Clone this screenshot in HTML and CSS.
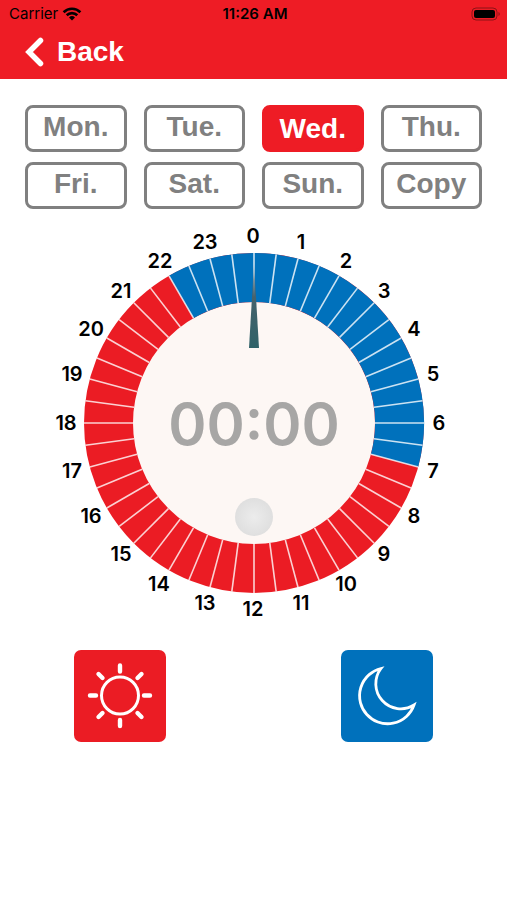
FILE: index.html
```html
<!DOCTYPE html>
<html lang="en">
<head>
<meta charset="utf-8">
<meta name="viewport" content="width=device-width, initial-scale=1">
<title>Day timer</title>
<link rel="stylesheet" href="styles.css">
</head>

<body>
<header class="top">
  <div class="status">
    <div class="carrier">
      <span>Carrier</span>
      <svg width="20" height="14" viewBox="0 0 20 14" aria-hidden="true">
        <g fill="none" stroke="#000" stroke-width="2.6">
          <path d="M1.6 5.2a12 12 0 0 1 16.8 0"/>
          <path d="M4.7 8.3a7.6 7.6 0 0 1 10.6 0"/>
        </g>
        <path d="M10 13.6l-3-3.1a4.3 4.3 0 0 1 6 0z"/>
      </svg>
    </div>
    <div class="clock">11:26 AM</div>
    <div class="battery">
      <svg width="30" height="14" viewBox="0 0 30 14" aria-hidden="true">
        <rect x="1" y="1" width="25" height="12" rx="4" fill="none" stroke="#8c1216"/>
        <rect x="3" y="3" width="21" height="8" rx="2"/>
        <path d="M27.5 5v4a2.2 2.2 0 0 0 0-4z" fill="#8c1216"/>
      </svg>
    </div>
  </div>
  <a class="back" href="#">
    <svg width="20" height="30" viewBox="0 0 20 30" aria-hidden="true">
      <path d="M15.5 3.5L4 15l11.5 11.5" fill="none" stroke="#fff" stroke-width="5.5" stroke-linecap="round"/>
    </svg>
    <span>Back</span>
  </a>
</header>

<main>
  <div class="days">
    <button class="day">Mon.</button>
    <button class="day">Tue.</button>
    <button class="day selected">Wed.</button>
    <button class="day">Thu.</button>
    <button class="day">Fri.</button>
    <button class="day">Sat.</button>
    <button class="day">Sun.</button>
    <button class="day">Copy</button>
  </div>

  <svg class="dial" viewBox="-200 -200 400 400" role="img" aria-label="24 hour dial">
    <defs>
      <!-- one quarter of the half hour marks -->
      <g id="hour">
        <path d="M0-121V-170"/>
        <path d="M0-121V-170" transform="rotate(7.5)"/>
      </g>
      <g id="quarter">
        <use href="#hour"/>
        <use href="#hour" transform="rotate(15)"/>
        <use href="#hour" transform="rotate(30)"/>
        <use href="#hour" transform="rotate(45)"/>
        <use href="#hour" transform="rotate(60)"/>
        <use href="#hour" transform="rotate(75)"/>
      </g>
      <linearGradient id="needle" x1="0" y1="0" x2="0" y2="1">
        <stop offset="0" stop-color="#5f6f78" stop-opacity="0.2"/>
        <stop offset="0.4" stop-color="#46626c"/>
        <stop offset="1" stop-color="#2f6268"/>
      </linearGradient>
      <radialGradient id="knob">
        <stop offset="0" stop-color="#ececec"/>
        <stop offset="1" stop-color="#dfdfdf"/>
      </radialGradient>
    </defs>

    <circle r="122" fill="#fdf7f4"/>
    <circle r="145.5" fill="none" stroke="#eb1c24" stroke-width="49"/>
    <!-- night, 22:00 to 7:00 -->
    <path d="M-72.75-126A145.5 145.5 0 0 1 140.54 37.66" fill="none" stroke="#0071bc" stroke-width="49"/>
    <g stroke="#fff" stroke-opacity="0.8" stroke-width="1.6">
      <use href="#quarter"/>
      <use href="#quarter" transform="rotate(90)"/>
      <use href="#quarter" transform="rotate(180)"/>
      <use href="#quarter" transform="rotate(270)"/>
    </g>
    <path d="M0-160L5-75H-5z" fill="url(#needle)"/>
    <circle cy="94" r="19" fill="url(#knob)"/>

    <g class="hours">
      <text x="-1" y="-180">0</text>
      <text x="47" y="-174">1</text>
      <text x="92" y="-155">2</text>
      <text x="130" y="-125">3</text>
      <text x="160" y="-87">4</text>
      <text x="179" y="-42">5</text>
      <text x="185" y="7">6</text>
      <text x="179" y="55">7</text>
      <text x="160" y="100">8</text>
      <text x="130" y="138">9</text>
      <text x="92" y="168">10</text>
      <text x="47" y="187">11</text>
      <text x="-1" y="193">12</text>
      <text x="-49" y="187">13</text>
      <text x="-95" y="168">14</text>
      <text x="-133" y="138">15</text>
      <text x="-163" y="100">16</text>
      <text x="-182" y="55">17</text>
      <text x="-188" y="7">18</text>
      <text x="-182" y="-42">19</text>
      <text x="-163" y="-87">20</text>
      <text x="-133" y="-125">21</text>
      <text x="-94" y="-155">22</text>
      <text x="-49" y="-174">23</text>
    </g>
    <text class="time" x="0" y="22">00:00</text>
  </svg>

  <div class="modes">
    <button class="mode sun" aria-label="Day">
      <svg width="92" height="92" viewBox="0 0 92 92" fill="none" stroke="#fff" aria-hidden="true">
        <circle cx="46" cy="45.5" r="18.5" stroke-width="3"/>
        <g stroke-width="4.4" stroke-linecap="round">
          <path d="M46 15.5v6M46 70v6M16 45.5h6M70 45.5h6"/>
          <path d="M24.5 24l4 4M63.5 63l4 4M67.5 24l-4 4M28.5 63l-4 4"/>
        </g>
      </svg>
    </button>
    <button class="mode moon" aria-label="Night">
      <svg width="92" height="92" viewBox="0 0 92 92" fill="none" stroke="#fff" aria-hidden="true">
        <path d="M40 18.5A28 28 0 1 0 73 55A25 25 0 0 1 40 18.5z" stroke-width="2.8"/>
      </svg>
    </button>
  </div>
</main>
</body>
</html>
```
FILE: styles.css
```css
* {
  box-sizing: border-box;
}
body {
  margin: 0;
  background: #fff;
  font-family: Inter, "Liberation Sans", sans-serif;
}
button {
  margin: 0;
  padding: 0;
  border: 0;
  cursor: pointer;
}
svg {
  display: block;
}
.top {
  background: #ee1c25;
  height: 79px;
}
.status {
  display: grid;
  grid-template-columns: 1fr auto 1fr;
  align-items: center;
  height: 27px;
  padding: 0 6px 0 9px;
  font-size: 15px;
  color: #000;
}
.carrier {
  display: flex;
  align-items: center;
  gap: 4px;
}
.clock {
  font-weight: 600;
}
.battery {
  justify-self: end;
}
.back {
  display: inline-flex;
  align-items: center;
  gap: 12px;
  height: 50px;
  padding-left: 25px;
  font-family: "Liberation Sans", sans-serif;
  font-size: 28px;
  font-weight: bold;
  color: #fff;
  text-decoration: none;
}
.days {
  display: grid;
  grid-template-columns: repeat(4, 1fr);
  gap: 10px 17px;
  padding: 26px 25px 0;
}
.day {
  height: 47px;
  padding-bottom: 3px;
  border: 3px solid #808080;
  border-radius: 8px;
  background: #fff;
  font-family: "Liberation Sans", sans-serif;
  font-size: 28px;
  line-height: 32px;
  font-weight: bold;
  color: #808080;
}
.day.selected {
  padding: 0;
  border-color: #ee1c25;
  background: #ee1c25;
  color: #fff;
}
.dial {
  width: 400px;
  max-width: 100%;
  margin: 14px auto 0;
}
.hours {
  font-size: 20px;
  font-weight: 600;
  text-anchor: middle;
}
.time {
  font-size: 58px;
  font-weight: 600;
  font-feature-settings: "case";
  text-anchor: middle;
  fill: #a7a6a5;
}
.modes {
  display: flex;
  justify-content: space-between;
  padding: 27px 74px 0;
}
.mode {
  border-radius: 7px;
}
.sun {
  background: #eb1c24;
}
.moon {
  background: #0071bc;
}
```
